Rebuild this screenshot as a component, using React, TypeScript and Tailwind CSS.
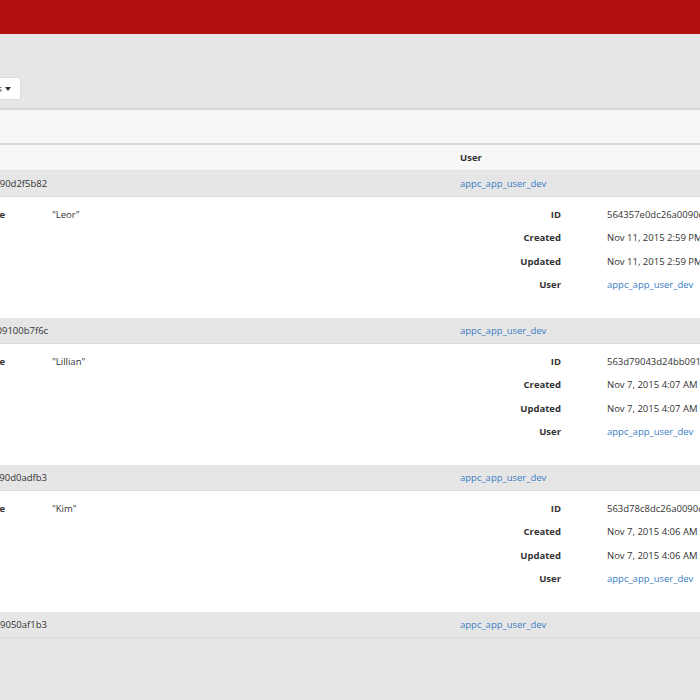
type UserRecord = {
  id: string;
  name: string;
  created: string;
  updated: string;
  user: string;
};

const records: UserRecord[] = [
  {
    id: "564357e0dc26a0090d2f5b82",
    name: "Leor",
    created: "Nov 11, 2015 2:59 PM",
    updated: "Nov 11, 2015 2:59 PM",
    user: "appc_app_user_dev"
  },
  {
    id: "563d79043d24bb09100b7f6c",
    name: "Lillian",
    created: "Nov 7, 2015 4:07 AM",
    updated: "Nov 7, 2015 4:07 AM",
    user: "appc_app_user_dev"
  },
  {
    id: "563d78c8dc26a0090d0adfb3",
    name: "Kim",
    created: "Nov 7, 2015 4:06 AM",
    updated: "Nov 7, 2015 4:06 AM",
    user: "appc_app_user_dev"
  },
  {
    id: "563d78a1dc26a009050af1b3",
    name: "Dana",
    created: "Nov 7, 2015 4:05 AM",
    updated: "Nov 7, 2015 4:05 AM",
    user: "appc_app_user_dev"
  }
];

function RecordRow({ record, open }: { record: UserRecord; open: boolean }) {
  return (
    <div>
      <div className="grid h-[26px] grid-cols-[560px_1fr] items-center border-b border-[#dadada] bg-[#e6e6e6] pt-[2px]">
        <span className="pl-[19px]">{record.id}</span>
        <a className="text-[#3a7dc4]">{record.user}</a>
      </div>
      {open && (
        <div className="flex h-[121px] bg-white pt-[6px]">
          <div className="grid w-[560px] grid-cols-[105px_auto] content-start gap-x-[47px]">
            <span className="text-right font-bold leading-[23px]">Name</span>
            <span className="leading-[23px]">"{record.name}"</span>
          </div>
          <div className="grid grid-cols-[101px_auto] content-start gap-x-[46px] leading-[23.3px]">
            <span className="text-right font-bold">ID</span>
            <span className="whitespace-nowrap">{record.id}</span>
            <span className="text-right font-bold">Created</span>
            <span className="whitespace-nowrap">{record.created}</span>
            <span className="text-right font-bold">Updated</span>
            <span className="whitespace-nowrap">{record.updated}</span>
            <span className="text-right font-bold">User</span>
            <a className="text-[#3a7dc4]">{record.user}</a>
          </div>
        </div>
      )}
    </div>
  );
}

export default function App() {
  return (
    <div className="min-h-[700px] overflow-hidden bg-[#e6e6e6] font-['Open_Sans',sans-serif] text-[9.5px] text-[#333]">
      <div className="h-[34px] bg-[#b3110f]" />
      <div className="-ml-[100px] w-[900px]">
        <div className="flex h-[74px] items-end pb-[8px]">
          <div className="flex w-[121px] justify-end">
            <button className="flex h-[23px] items-center rounded-[3px] border border-[#dcdcdc] bg-white pl-[10px] pr-[9px] pt-[1px] text-[#333]">
              Actions
              <span className="ml-[3px] h-0 w-0 border-x-[3px] border-t-[4px] border-x-transparent border-t-[#333]" />
            </button>
          </div>
        </div>
        <div className="h-[37px] border-y-2 border-[#d8d8d8] bg-[#f7f7f7]" />
        <div className="grid h-[26px] grid-cols-[560px_1fr] items-center border-b border-[#dedede] bg-[#f7f7f7] pt-[2px] font-bold">
          <span className="pl-[19px]">ID</span>
          <span>User</span>
        </div>
        {records.map((record, index) => (
          <RecordRow key={record.id} record={record} open={index < 3} />
        ))}
      </div>
    </div>
  );
}
